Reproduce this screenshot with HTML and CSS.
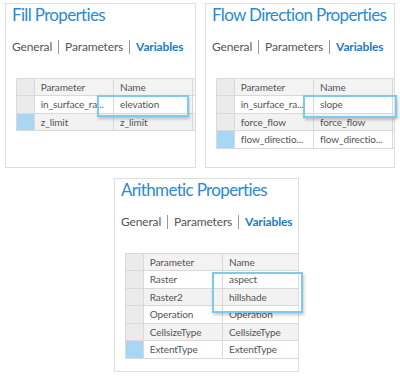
FILE: index.html
```html
<!DOCTYPE html>
<html lang="en">
<head>
  <meta charset="UTF-8" />
  <title>Model Variables</title>
  <link rel="stylesheet" href="styles.css">
</head>
<body>
  <div class="row top-row">
    <div class="panel fill">
      <div class="clip">
        <h1>Fill Properties</h1>
        <div class="tabs">
          <span>General</span><span class="sep"></span><span>Parameters</span><span class="sep"></span><span class="active">Variables</span>
        </div>
        <table class="grid">
          <tr class="head"><td class="rh"></td><td>Parameter</td><td>Name</td><td class="extra">Is</td></tr>
          <tr><td class="rh"></td><td>in_surface_ra...</td><td>elevation</td><td class="extra"></td></tr>
          <tr class="alt"><td class="rh sel"></td><td>z_limit</td><td>z_limit</td><td class="extra"></td></tr>
        </table>
      </div>
      <div class="highlight hl-fill"></div>
    </div>

    <div class="panel flow">
      <div class="clip">
        <h1>Flow Direction Properties</h1>
        <div class="tabs">
          <span>General</span><span class="sep"></span><span>Parameters</span><span class="sep"></span><span class="active">Variables</span>
        </div>
        <table class="grid">
          <tr class="head"><td class="rh"></td><td>Parameter</td><td>Name</td><td class="extra">I</td></tr>
          <tr><td class="rh"></td><td>in_surface_ra...</td><td>slope</td><td class="extra"></td></tr>
          <tr class="alt"><td class="rh"></td><td>force_flow</td><td>force_flow</td><td class="extra"></td></tr>
          <tr><td class="rh sel"></td><td>flow_directio...</td><td>flow_directio...</td><td class="extra"></td></tr>
        </table>
      </div>
      <div class="highlight hl-flow"></div>
    </div>
  </div>

  <div class="row bottom-row">
    <div class="panel arith">
      <div class="clip">
        <h1>Arithmetic Properties</h1>
        <div class="tabs">
          <span>General</span><span class="sep"></span><span>Parameters</span><span class="sep"></span><span class="active">Variables</span>
        </div>
        <table class="grid">
          <tr class="head"><td class="rh"></td><td>Parameter</td><td>Name</td><td class="extra"></td></tr>
          <tr><td class="rh"></td><td>Raster</td><td>aspect</td><td class="extra"></td></tr>
          <tr class="alt"><td class="rh"></td><td>Raster2</td><td>hillshade</td><td class="extra"></td></tr>
          <tr><td class="rh"></td><td>Operation</td><td>Operation</td><td class="extra"></td></tr>
          <tr class="alt"><td class="rh"></td><td>CellsizeType</td><td>CellsizeType</td><td class="extra"></td></tr>
          <tr><td class="rh sel"></td><td>ExtentType</td><td>ExtentType</td><td class="extra"></td></tr>
        </table>
      </div>
      <div class="highlight hl-arith"></div>
    </div>
  </div>
</body>
</html>
```

FILE: styles.css
```css
:root {
  --blue: #2b8ad3;
  --line: #d9d9d9;
}
*, *::before, *::after {
  box-sizing: border-box; margin: 0; padding: 0;
}
body {
  font-family: 'Lato', 'Open Sans', sans-serif;
  background: #fff;
  color: #555;
  width: 400px;
  height: 376px;
  overflow: hidden;
  padding: 3px 0 0 5px;
}
.row {
  display: flex;
}
.top-row {
  gap: 9px;
}
.bottom-row {
  margin-top: 10px;
  padding-left: 109px;
}
.panel {
  position: relative;
  background: #fff;
  border: 1px solid #dedede;
}
.clip {
  overflow: hidden;
  height: 100%;
  padding: 0 0 0 6px;
}
.fill { width: 191px; height: 165px; }
.flow { width: 190px; height: 165px; }
.arith { width: 185px; height: 194px; }

h1 {
  font-size: 17px;
  font-weight: 400;
  color: var(--blue);
  line-height: 22px;
  letter-spacing: -0.65px;
  white-space: nowrap;
}
.tabs {
  display: flex;
  align-items: center;
  font-size: 12px;
  letter-spacing: -0.15px;
  color: #555;
  margin-top: 13px;
  line-height: 16px;
  white-space: nowrap;
}
.tabs span {
  flex-shrink: 0;
}
.sep {
  display: inline-block;
  width: 1px;
  height: 14px;
  background: #999;
  margin: 0 6px;
}
.tabs .active {
  color: #1c7cc4;
  font-weight: 700;
}
.grid {
  border-collapse: collapse;
  table-layout: fixed;
  margin: 23px 0 0 4px;
  font-size: 10px;
  letter-spacing: -0.1px;
  color: #555;
  width: 240px;
}
.grid tr {
  height: 17.5px;
}
.grid .head {
  height: 17px;
}
.grid td {
  padding: 0 0 0 6px;
  border: 1px solid var(--line);
  white-space: nowrap;
  overflow: hidden;
  width: 76px;
  background: #fff;
}
.grid .head td {
  background: #f3f3f3;
}
.grid .alt td {
  background: #f2f2f2;
}
.grid td.rh {
  width: 17px;
  background: #ebebeb;
}
.grid td.rh.sel {
  background: #a9d6f3;
}
.grid td.extra {
  width: 60px;
}

.highlight {
  position: absolute;
  border: 2px solid #7ccaf0;
  box-shadow: 1px 2px 3px rgba(0, 0, 0, 0.22);
}
.hl-fill { left: 91px; top: 91px; width: 92px; height: 22px; }
.hl-flow { left: 97px; top: 91px; width: 94px; height: 23px; }
.hl-arith { left: 97px; top: 93px; width: 91px; height: 41px; }
```
